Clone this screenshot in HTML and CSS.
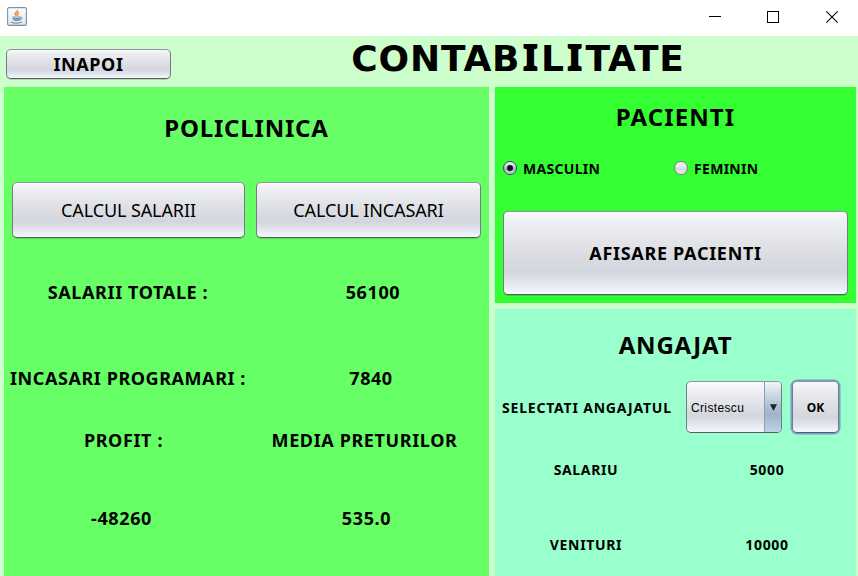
FILE: index.html
```html
<!DOCTYPE html>
<html lang="ro">
<head>
<meta charset="utf-8">
<title>Contabilitate</title>
<link rel="stylesheet" href="styles.css">
</head>
<body>
<header class="titlebar">
  <svg class="app-icon" width="20" height="19" viewBox="0 0 20 19">
    <defs><linearGradient id="g" x1="0" y1="0" x2="0" y2="1"><stop offset="0" stop-color="#fff"/><stop offset="1" stop-color="#dfe5ea"/></linearGradient></defs>
    <rect x=".6" y=".6" width="18.8" height="17.8" rx="1.5" fill="url(#g)" stroke="#7c92a5" stroke-width="1.1"/>
    <path d="M10.5 3c1 1.500-3.500 3-2 4.500l1 1.500M12 5.500c-2 1-2 1.500-1 3" fill="none" stroke="#ef8a3c" stroke-width="1.500"/>
    <path d="M5.500 9.500h8v1c0 2-1 3.500-2.500 3.500h-3c-1.500 0-2.500-1.500-2.500-3.500z" fill="#7d9bb5"/>
    <path d="M6.500 11.300h6M13.500 10.200c2-.4 2.300 2-1 2.500M4 15.200c3 1.400 8 1.200 11-.3" fill="none" stroke="#5f819e" stroke-width="1"/>
    <path d="M7 10.700h5.500" stroke="#dce6ee" stroke-width=".7"/>
  </svg>
  <svg class="controls" width="132" height="14" viewBox="0 0 132 14" fill="none" stroke="#000">
    <path d="M1 6.500h12M59.500 1.500h11v11h-11z" shape-rendering="crispEdges"/>
    <path d="M118.300 1.300l11.400 11.400M129.700 1.300L118.300 12.700" stroke-width="1.100"/>
  </svg>
</header>
<main class="window">
  <div class="top">
    <button class="btn back">INAPOI</button>
    <h1>CONTAB<span class="wide-i">I</span>L<span class="wide-i">I</span>TATE</h1>
  </div>
  <div class="panels">
    <section class="panel clinic">
      <h2 class="clinic-title">POLICLINICA</h2>
      <div class="calc">
        <button class="btn">CALCUL SALARII</button>
        <button class="btn">CALCUL INCASARI</button>
      </div>
      <div class="stat salaries"><span>SALARII TOTALE :</span><span>56100</span></div>
      <div class="stat income"><span>INCASARI PROGRAMARI :</span><span>7840</span></div>
      <div class="stat heads"><span>PROFIT :</span><span>MEDIA PRETURILOR</span></div>
      <div class="stat results"><span>-48260</span><span>535.0</span></div>
    </section>
    <div class="side">
      <section class="panel patients">
        <h2>PACIENTI</h2>
        <div class="radios">
          <label><i class="radio on"></i><span>MASCULIN</span></label>
          <label><i class="radio"></i><span>FEMININ</span></label>
        </div>
        <button class="btn show">AFISARE PACIENTI</button>
      </section>
      <section class="panel employee">
        <h2>ANGAJAT</h2>
        <div class="pick">
          <span class="pick-label">SELECTATI ANGAJATUL</span>
          <div class="combo"><span class="combo-value">Cristescu</span><span class="combo-arrow"><svg width="7" height="7" viewBox="0 0 7 7"><path d="M0 .3h7L3.500 7z" fill="#1d2328"/></svg></span></div>
          <button class="btn ok">OK</button>
        </div>
        <div class="fact"><span>SALARIU</span><span>5000</span></div>
        <div class="fact last"><span>VENITURI</span><span>10000</span></div>
      </section>
    </div>
  </div>
</main>
</body>
</html>
```
FILE: styles.css
```css
* { box-sizing: border-box; }
body {
  margin: 0;
  width: 858px;
  height: 576px;
  overflow: hidden;
  background: #fff;
  color: #000;
  font: bold 18px/22px "Noto Sans", sans-serif;
  white-space: nowrap;
}
h1, h2 { margin: 0; text-align: center; font-weight: 700; }
h2 { font-size: 24px; line-height: 30px; letter-spacing: .8px; }

.titlebar {
  display: flex;
  justify-content: space-between;
  height: 36px;
  padding: 7px 18px 0 7px;
}
.controls { margin-top: 3px; }

.window { height: 540px; background: #cfc; }
.top { display: flex; height: 51px; }
.top h1 {
  width: 346px;
  margin-left: 174px;
  font: bold 36px/46px "DejaVu Sans", sans-serif;
  letter-spacing: .8px;
}
.wide-i { padding: 0 1.800px; font-family: "Noto Sans", sans-serif; font-size: 37px; font-weight: 900; line-height: 1; }

.btn {
  padding: 0;
  border: 1px solid;
  border-color: #92959e #777b83 #585c64;
  border-radius: 5px;
  background: linear-gradient(#fafafc 0, #eeeff2 12%, #dfe0e5 45%, #d3d6de 72%, #e5e8f0 88%, #f6f8ff 100%);
  box-shadow: 0 1px 0 rgba(0, 40, 0, .18);
  color: #000;
  font: inherit;
  letter-spacing: .6px;
}
.back { width: 165px; height: 30px; margin: 13px 0 0 6px; }

.panels { display: flex; gap: 6px; height: 489px; padding-left: 4px; }
.clinic { width: 485px; background: #6f6; overflow: hidden; }
.clinic-title { padding-top: 26px; }
.calc {
  display: grid;
  grid-template-columns: 233px 225px;
  gap: 11px;
  height: 56px;
  margin: 39px 0 0 8px;
}
.calc .btn { font-weight: 400; letter-spacing: -.1px; }

.stat { display: grid; height: 22px; text-align: center; letter-spacing: .62px; }
.salaries { grid-template-columns: 248px 242px; margin-top: 43px; }
.income { grid-template-columns: 248px 238px; margin-top: 64px; letter-spacing: .57px; }
.heads { grid-template-columns: 239px 243px; margin-top: 40px; }
.results { grid-template-columns: 235px 255px; margin-top: 56px; }

.side { width: 361px; }
.patients { height: 216px; padding: 15px 8px 0; background: #3f3; }
.patients h2 { letter-spacing: 1.100px; }
.radios {
  display: grid;
  grid-template-columns: 171px 1fr;
  margin-top: 26px;
  font-size: 14px;
  letter-spacing: .3px;
}
.radios label { display: flex; align-items: center; gap: 6px; height: 22px; }
.radio {
  display: grid;
  place-items: center;
  width: 14px;
  height: 14px;
  margin-top: -2px;
  border: 1px solid #777c85;
  border-radius: 50%;
  background: linear-gradient(#fafafb, #d6d9df 65%, #f0f2f8);
}
.on { border-color: #37455a; background: linear-gradient(#f4f8fb, #a5b9cb 60%, #c5d9ec); }
.on::after { content: ""; width: 6px; height: 6px; border-radius: 50%; background: #101214; }
.show { display: block; width: 345px; height: 84px; margin-top: 31px; letter-spacing: .7px; }

.employee { height: 267px; margin-top: 6px; padding-top: 21px; background: #9fc; font-size: 14px; }
.pick { display: flex; align-items: center; height: 54px; margin-top: 20px; padding-left: 7px; }
.pick-label { width: 184px; padding-top: 2px; letter-spacing: .8px; }
.combo {
  display: flex;
  width: 96px;
  height: 52px;
  border: 1px solid;
  border-color: #92959e #777b83 #585c64;
  border-radius: 5px;
  overflow: hidden;
  background: linear-gradient(#fafafc, #dfe0e5 48%, #d3d6de 68%, #f4f6ff);
  font: 13px/52px "Liberation Sans", sans-serif;
}
.combo-value { width: 78px; padding-left: 4px; font-size: 12px; letter-spacing: .35px; }
.combo-arrow {
  display: grid;
  place-items: center;
  width: 17px;
  border-left: 1px solid #8ba0b5;
  background: linear-gradient(#f0f5f8, #b1c4d4 45%, #a0b5ca 65%, #bdd3e9);
}
.ok {
  width: 47px;
  height: 52px;
  margin-left: 10px;
  padding-top: 2px;
  box-shadow: 0 0 0 1.500px #739fca;
  font-size: 12px;
  letter-spacing: 0;
}
.fact {
  display: grid;
  grid-template-columns: 182px 180px;
  height: 22px;
  margin-top: 25px;
  text-align: center;
  letter-spacing: .65px;
}
.last { margin-top: 53px; }
```
